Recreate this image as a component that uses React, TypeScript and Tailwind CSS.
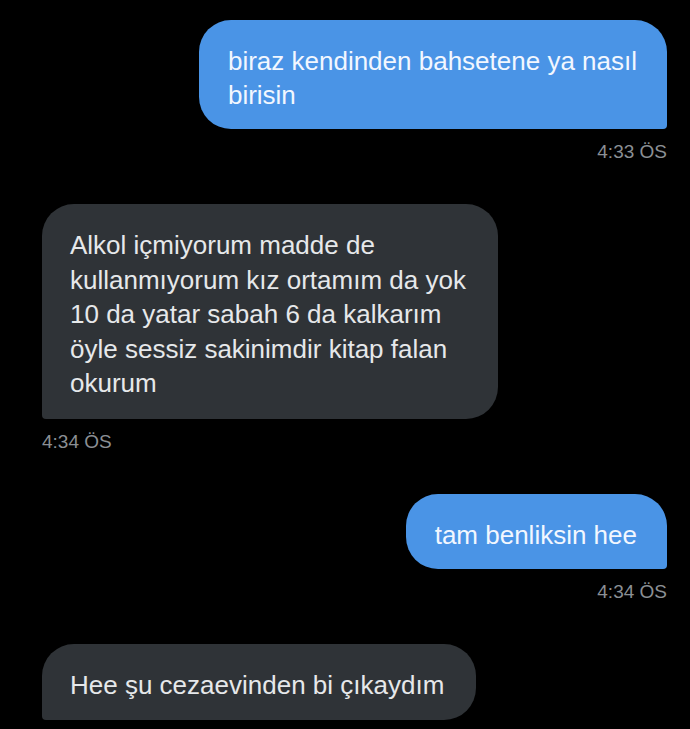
const font = { fontFamily: '"Liberation Sans", Arial, sans-serif' };

type Msg = { mine: boolean; lines: string[]; time: string };

const messages: Msg[] = [
  { mine: true, lines: ["biraz kendinden bahsetene ya nasıl", "birisin"], time: "4:33 ÖS" },
  {
    mine: false,
    lines: [
      "Alkol içmiyorum madde de",
      "kullanmıyorum kız ortamım da yok",
      "10 da yatar sabah 6 da kalkarım",
      "öyle sessiz sakinimdir kitap falan",
      "okurum",
    ],
    time: "4:34 ÖS",
  },
  { mine: true, lines: ["tam benliksin hee"], time: "4:34 ÖS" },
  { mine: false, lines: ["Hee şu cezaevinden bi çıkaydım"], time: "" },
];

function Bubble({ msg }: { msg: Msg }) {
  return (
    <div className={msg.mine ? "flex flex-col items-end mb-[41px]" : "flex flex-col items-start mb-[41px]"}>
      <div
        className={
          msg.mine
            ? "bg-[#4a94e6] text-[#f2f7ff] rounded-[32px] rounded-br-[4px] pl-[29px] pr-[30px] pt-[24px] pb-[17px] text-[26px] leading-[34px] whitespace-nowrap"
            : "bg-[#2f3337] text-[#e6e8ea] rounded-[32px] rounded-bl-[4px] pl-[28px] pr-[32px] pt-[24px] pb-[18px] text-[26px] leading-[34.5px] whitespace-nowrap"
        }
      >
        {msg.lines.map((l, i) => (
          <div key={i}>{l}</div>
        ))}
      </div>
      {msg.time && (
        <div className="mt-[12px] text-[19px] leading-[22px] text-[#8b8f94]">{msg.time}</div>
      )}
    </div>
  );
}

export default function App() {
  return (
    <div className="w-[690px] h-[729px] overflow-hidden bg-black pt-[20px] pl-[42px] pr-[23px]" style={font}>
      {messages.map((m, i) => (
        <Bubble key={i} msg={m} />
      ))}
    </div>
  );
}
